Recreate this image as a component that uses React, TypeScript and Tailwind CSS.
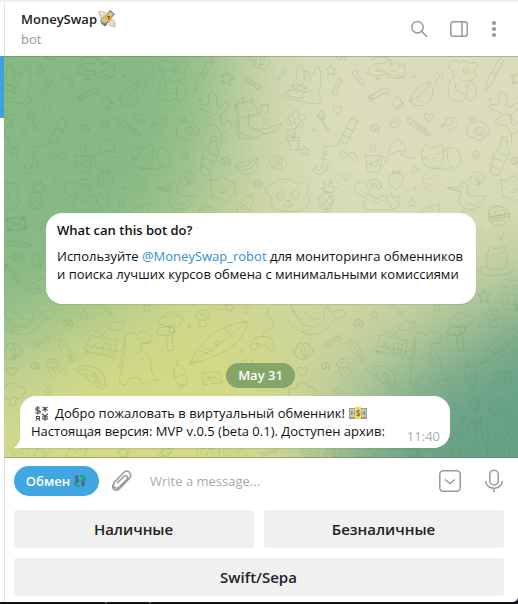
import React from "react";

/* One tile of the doodle wallpaper; it repeats every 871 units. */
const STAR = "M0-15l4 10 11 1-8 8 3 11-10-5-10 5 2-11-8-8 11-1z";
const HEART = "M0 13C-24-2-12-17 0-7 12-17 24-2 0 13z";
const SWIRL = "M0 0c4-4 7 4 1 6-9 2-12-9-4-13 11-4 18 8 11 16";
const BONE = "M-14-4c-10-8-16 4-8 5-4 7 7 11 9 3h26c2 8 13 4 9-3 8-1 2-13-8-5z";
const CURVE = "M-12-26c-8 4-8 14 0 22s10 14 14 26c8 6 10-4 6-12-4-12-14-16-12-26 4-6-2-12-8-10";
const PENCIL = "M-40-6l-6 6 6 8h64l18-8-18-6zM-28-6v14M24-6v14M-20 0h38";
const CHICK = "M-12-8c0-16 24-16 22 2 8 4 8 18-8 20-16 2-22-8-16-18zM10-4l8 3-8 4M-4 6c2 6 10 4 10-2M-4 14v8M4 14v8M0-9v2";
const ENVELOPE = "M-28-16l54-4 6 34-54 6zM-28-16l30 20 24-24M-22 20l16-22M32 14L8-2";
const CLOUD = "M-34 10c-14-14 0-28 12-22 2-20 30-22 34-4 16-8 28 10 14 20 2 12-20 14-24 4-6 10-26 10-28 0-2 6-8 6-8 2zM-10 14l2 20h12l4-20";
const DOG = "M-38 58c-30 2-30-18-8-26l20-2c-10-14 0-26 6-36-2-20 4-46 12-42 8 6 8 18 8 24 12-4 22 0 26 8 10 0 8-30 20-24 10 16 8 64-2 86 20 12 14 26-8 26zM-34 14l-18 32 46 10 16-34zM-34 14l16 24 28-16M2-8a9 13 0 1 0 18 0a9 13 0 1 0-18 0M8-8v4M-20 10c8 8 16 6 20-2M-20 28c14 12 36 12 48 0";
const BEAR = "M-30-20c-14-4-18-20-4-30 10-8 18-2 22 4 12-6 26-6 36 2 8-8 22-4 20 8-2 10-8 8-10 10 8 12 4 28-12 32 18 18 28 44 8 58-12 10-20-4-22-6-10 16-46 16-50-8-8-24 4-48 18-58-6-2-8-6-6-12zM0-24a8 10 0 1 0 16 0a8 10 0 1 0-16 0M6-24v3M20-14l12-4M-10 0c10 12 26 12 34 4M-22 16c-6 20 14 34 34 30M16 16c-8 18-4 34-4 42";
const FOX = "M-60 10c6-26 28-34 50-30 12-20 22-8 20 6l20-12 4 18 18-10-2 16c6 10 2 20-8 24-18 8-34-2-38-12-18 8-50 8-64 0zM8 0c4 8 12 8 16 0M-50-30c20-14 60-10 70 8M22 14l6 3 6-3M34 20l18 2M8 20l-14 4M-38-6l36 14M-40 4h20";
const MELON = "M-34 16C-28-8-8-28 26-40 40-18 40 10 12 28-4 38-28 32-34 16zM-34 16C-8 10 18-12 26-40M-14 16l3-2M0 20l3-2M12 6l3-2M20-6l3-4M22 10l2-4M-2 7l2-3";
const BRUSH = "M-20 50c2-24 6-40 16-52l12 8C4 22-6 38-20 50zM-4-2l20-36c6-14 20-8 16 4L8 6M0-8l14 8M18-36l12 6";
const GIRAFFE = "M-10-54c-6-6-8-12-2-14l6 12c6-2 12-2 14 0l4-12c8 2 4 10 0 14 12 6 20 24 16 32-6 8-20 6-26 4l2 30c20 14 46 12 66 2l30-10-18 24-40 8c-10 16-60 20-70 2-8-16-4-40 2-56l-8-26c-2-8 10-10 24-10zM-2-38v4M14-38v4M2-22c6 4 14 4 20 0M-14-14l20 4M-20 30c10 10 20 12 36 12M24 22l30 14M-24-10v60";
const FLOWERPOT = "M-8-34c-22-8-14-26 0-20 0-22 20-20 18-2 20-8 26 12 8 18 16 14 0 26-10 12-6 18-26 12-18-4-20 8-26-12-10-18M-2-38a8 8 0 1 0 14 0a8 8 0 1 0-14 0M2-20l-6 38M-24 10h38v10h-38zM-20 20l6 28h22l4-28M-4 8c-16-2-24-12-20-22 14 2 20 10 20 22";
const BOTTLE = "M14-60l16 6-2 24c12 18 4 34-8 50L4 58c-8 4-26-4-26-14l8-40c2-18 16-22 20-34zM12-48l18 6M-14 4l32 14M-20 28l28 14M2-14c6 8 14 10 24 12";
const CAT = "M-48 24c-18-22-8-52 2-60l14 10 22-4 10-10c8 8 8 20 6 28 14-26 44-18 50 8 8 26-6 46-20 36l-8-6M-48 24c12 18 44 16 50-6 6-8 8-16 4-30M-38-8c4 4 8 4 12 0M-14-12c4 4 8 4 12 0M-24 2l4 4 4-4M-54 0l14 2M-54 8l14-2M-30 32c20 8 56 8 60-2M30-24c-14 8-16 30-2 42";
const MUG = "M-28-18h46l-4 46c-8 6-28 6-38 0zM18-14c20-8 22 26-4 26M-18 6l28-12-8 22-8-6-6 4-2-8zM-14-28c-8-10 8-10 0-22M0-28c-8-10 8-10 0-22";
const ANCHOR = "M6-30a6 6 0 1 0 12 0a6 6 0 1 0-12 0M10-24L2 16c-4 10-16 6-18-8l-8 12c4 12 24 18 34 4l10-6 2-14-12 10M-2-16l22 6";
const BANANA = "M-34-2c18 6 36 2 54-24l8 0c4 20 0 40-20 48-20 6-36-2-44-20zM-26 8c20 6 44-2 52-30M-34-2l-2-8 8-2c14 2 30-2 44-18";
const BERRY = "M-22-8c12-16 36-16 44 0 0 20-14 34-24 38-12-6-22-20-20-38zM-8-16l-4-12 12 8 12-10-4 14M-8 0v3M6-4v3M0 10v3M10 8v3M-8 14v3";
const CUSHION = "M-38-22c18 4 30 0 38-14 12 14 24 20 38 20-4 16-4 28 2 40-16 4-26 10-34 20-10-12-22-16-38-16 0-18-2-34-6-50zM-12 12c8 8 16 6 24-2M0 4a1 1 0 0 0 8 0M-24 0l6 3M18-4l6-2";
const PANDA = "M-52 6c-22-12-18-36 0-32 14-24 60-28 78-6 20-14 46 6 32 28 20 36-6 56-52 54-44 2-66-16-58-44zM-32 4c4-18 28-18 20 2-6 16-22 14-20-2zM10 0c4-16 26-14 24 4-8 14-24 10-24-4zM-24 6v3M20 2v3M-4 18l10-2-4 8zM-16 32c8 6 28 4 32-4";
const PINEAPPLE = "M-10-12c-18 14-16 42 0 50 20 8 36-18 28-40-6-14-18-16-28-10zM-14 0l30 28M-18 16l22 22M0-12l20 26M16-6l-30 36M20 12L-2 36M2-12l-12 12M-2-14l-14-12 12 2-2-20 12 12 10-18 2 22 14 0-12 14z";
const SLOTH = "M-30-28c-10-10-38-2-32 18 4 16 20 18 32 24M-12-4c-22-6-14-36 6-36 22-2 34 22 18 34M-16 4c-12-6-18 12-8 18-16 8-14 28 8 30h54c16-4 10-26-4-24 8-14-4-24-14-18l-16 8zM-12-22a6 6 0 1 0 12 0a6 6 0 1 0-12 0M4-18a6 6 0 1 0 12 0a6 6 0 1 0-12 0M-10 24c8 10 26 8 32-2M40 14l10-12 2 16 20-8-4 20 8 10-30 12";
const DUCK = "M-50-28l34 0c4-20 26-18 26 2v18l24 8 30-4-18 34c-20 12-50 10-60-8-4-20 6-26 4-38zM-50-24l32 8M-8-32v3M0 12c14 18 40 16 46 0M-2 36l-4 12 14-6M20 38l4 10 8-6";
const AVOCADO = "M16-26C6-34-4-18-14-6c-22 16-14 34 0 34C8 32 22 0 22-16c0-6-2-8-6-10zM-12 8a7 7 0 1 0 14 0a7 7 0 1 0-14 0";
const BURGER = "M-32 2c-4-38 52-44 62-12zM-32 2l62-12 2 8-62 12zM-28 10c6 30 56 18 58-12M-14-16l3 2M0-22l3 2M12-16l3 2M-26 14c8 8 12-6 20 0s14-8 22-4";
const HATBEAR = "M-36 20c-24-6-22 22 8 26 44 6 90-10 70-28-10-12-20-6-20-6M-30 22c-4-24-2-40 6-48-6-14 8-20 14-8l20-2c6-12 20-4 14 8 8 12 6 36 4 48M-12-18v3M8-20v3M-6-8l8-2M-32 22c16 12 50 10 62-4";
const UMBRELLA = "M-50-50c4 26 16 42 44 56C-2-20-20-40-50-50zM-50-50L14 30c12 14-10 26-12 12M-50-50c18 14 34 34 44 56";
const WHALE = "M-90-50c10 40 30 66 60 68 20 2 30-10 40-22-6-20 0-34 12-38 0 14 10 18 18 16 10-8 26-10 34 4-8 14-20 16-32 14-14 26-34 48-66 50C-60 42-90 20-102-6M-86-30l10 4M-78-16l8 2M-64-4l8 0M-50-30c10 20 30 28 50 26M-48 14l-10 20 24-6";
const DINO = "M-6-60c-18-18-40-6-38 14 4 26-4 56-10 92-6 20-8 34 0 40 14 6 22 0 20-14 14-6 28-6 38 0 0 16 12 20 24 10 14-12 26-8 32-6-18-12-24-24-24-36 0-28-14-46-26-52-4-8-6-16-4-24 22 2 34-8 28-22-8-18-36-18-44-2M6-52v3M14-38c8 4 16 2 20-4M4-12l-18 10M14 4l-16 12M-44-46l-6 10 4 10-8 10 4 12-8 10 4 12-6 10 2 12";
const POPSICLE = "M-22-30c-8 10-4 20 6 32l18 20 10-12C8-6-4-26-22-30zM-14-16L6 10M4 20l8 18 4-2-6-18M10 18l14 16M14 12l16 18";
const PACK = "M-38-22l82 16-14 50-84-20zM-30-38l8 12 8-10 10 14 10-8 8 14M-32-4l16 24M-18 0l-16 14M4 2l22 4-6 28-22-4zM12 8l4 16M-44 10l88 16";
const WATCH = "M-20-30c-16 0-16 20-4 22l14-2 4 38c4 6 16 4 16-2L4-10l10-10c-4-14-20-12-34-10zM-8-8l12-2M0-20v2";
const BOARD = "M-86 62C-66 8-14-54 84-66 88-10 16 38-86 62zM-86 62C-34 28 34-18 84-66M-60 20l34 14M-48 12l32 12M14-48L44-14M-10 0a6 6 0 1 0 12 0a6 6 0 1 0-12 0";
const MUSHROOM = "M-22-6c4-26 40-24 44 0-4 14-34 20-44 0zM-10 6l-2 16c6 6 20 6 24 0L8 6M-8-14a5 5 0 1 0 10 0M4-8a5 5 0 1 0 10 0";
const PAD = "M-24-16c10-6 40-6 48 0 12 14 14 34 4 38-12 0-14-12-18-16h-22c-4 10-14 18-22 10-4-12 0-24 10-32zM-18-4v10M-23 1h10M12-4v2M20 4v2M0-20c-6-30 50-10 30-50-10-12-20-16-14-36";
const SHELL = "M-22-8c0-14 14-18 18-10 8-8 20 0 18 8 12 2 10 18 2 22l-20 12-16-8c-12-6-10-18-2-24zM-10-8L-2 20M2-10L0 18M14-4L2 18";
const JELLY = "M-26-10c0-24 34-24 38-4-4 12-24 18-38 4zM-14-4c-8 20 10 18 2 34M-4-4c-4 16 16 16 8 30M4-6c4 14 18 10 14 24M-12-16c6-4 12-4 16-2M12-8c10 16 18 10 22 20";
const PIZZA = "M-42-20C-30-44 40-34 44 8c0 16-2 26-6 32zM-32-16C-14-30 26-18 32 28M-16-6a5 5 0 1 0 10 0a5 5 0 1 0-10 0M6-4a6 6 0 1 0 12 0a6 6 0 1 0-12 0M14 14a5 5 0 1 0 10 0a5 5 0 1 0-10 0";
const ICECREAM = "M-20-12c-2-22 18-26 28-12 12 20 12 36 8 50l-24 2c-6-12-12-26-12-40zM-16 0c10 8 18-10 28 0M-2 28l2 12c6 4 8-2 6-14M-12-34c-4-8 0-12 4-14 2 8 0 12-4 14";
const DONUT = "M-32-8c2-24 40-26 58-2 18 26-6 46-30 36-20-6-30-18-28-34zM-8 0c4-10 16-6 18 4-2 10-18 8-18-4zM-20-8l5-3M-6-18l5 3M12-12l4 4M18 8l-3 4M-16 8l5 3M-26 4c6 2 10 12 18 14s18 6 26 0";
const GIFT = "M-34-18l64-14 4 16-64 14zM-26-2l4 38c20 6 44-2 54-12l-4-38M-8-24l8 62M10-28l6 58M-4-24c-24-2-16-20 4-6 6-20 24-12 6 2";
const CASTLE = "M-44 40V4l-6-2 10-22 10 22-6 2v12h18V-4l-8-2 14-26 14 26-8 2v20h18V-6l-6-2 12-28 14 28-8 2v46M-12 40V24c4-8 14-8 16 0v16M-30 26v6M22 26v6";
const STAIR = "M0-26c-10 0-10 12-2 16s10 10 4 18c-2 10-14 2-18 10-4 10 10 10 10 22M12-16c12 0 14 12 6 20s0 16 8 18M-10-14c-14 4-18 16-6 22s10 20-4 26";
const CORAL = "M-8-64c-14 8-2 28-8 36s-22-6-26 6c2 18 30 12 36 26 4 14-22 8-20 20 4 18 34 4 42 22 8 18 8 26 8 50M-8-64c16-2 22 16 16 30-4 14 14 22 20 10s22-8 16 8c-10 18-26 14-24 30M4 4c14-6 24 4 20 18s12 20 16 6 20-4 14 8c-10 22-26 22-30 32";
const DOT = "M-4 0a4 4 0 1 0 8 0a4 4 0 1 0-8 0";

type Doodle = [string, number, number, number?, number?];
const DOODLES: Doodle[] = [
  [DOG, 910, 90], [STAR, 122, 60], [BONE, 140, 110, -65], [CURVE, 208, 84, -12], [FOX, 292, 60],
  [BEAR, 518, 85], [BRUSH, 606, 72], [STAR, 682, 84, 12, 1.3], [BONE, 758, 100, 30, 1.1], [MUG, 782, 32, -70, 0.8],
  [PENCIL, 845, 76, 125, 0.55], [STAIR, 445, 80, 0, 0.65], [MELON, 393, 135], [CURVE, 265, 135, 90, 1.2], [CHICK, 322, 160],
  [CORAL, 640, 190, 0, 1], [GIRAFFE, 742, 215, 0, 1.05], [HEART, 142, 180], [SWIRL, 90, 198], ["M0 0a12 12 0 1 0 24 0a12 12 0 1 0-24 0M14 12l20 34-4 2L10 12", 82, 196],
  ["M-24 34L10-34c4-8 24 2 20 10L-4 42zM10-34l20 10M-14 14l20 10M-4-6L16 4M-24 34c-10 30-30 4-54 20", 172, 240], ["M-12 0c2-14 20-14 22 0 4 12-22 12-22 0M-14-8v-5M-5-14v-6M6-14v-6M14-8v-5", 314, 224], [PENCIL, 388, 232, 37], [HEART, 416, 202, 8], [STAIR, 480, 220, 50, 0.85],
  ["M-34 0c-8-24 12-30 28-26 14-10 30 2 28 12 20 4 14 26-2 26-8 24-32 16-32 6-14 0-26-6-22-18zM-10 0a14 12 0 1 0 28 0a14 12 0 1 0-28 0M0-4v2M8-4v2M0 4c2 4 8 4 10 0", 564, 244], [FLOWERPOT, 886, 252],
  ["M-8-14h20v22M-8-14v26M-16 12a4 4 0 1 0 8 0M4 8a4 4 0 1 0 8 0", 792, 178], [STAIR, 796, 212, 0, 0.45], [BOTTLE, 622, 318], [CAT, 452, 320], ["M-44-4c6-20 18-44 32-36 14 8 22 20 18 38-10-8-30-6-48 10zM-8 2c16 8 26 16 46 10", 338, 310],
  [MUG, 255, 335], ["M-4 0l-22-14c-8 12-2 22 4 26l18-8 16 16c10-4 8-18 2-24L4-6l-8 6z", 180, 314], [ANCHOR, 92, 340], [STAR, 43, 303], [SWIRL, 674, 334, 0, 1.4], [BANANA, 744, 350], [DONUT, 834, 338, 0, 0.8], [HEART, 838, 332, 0, 0.7],
  ["M-12 0a12 12 0 1 0 24 0a12 12 0 1 0-24 0M-5 0a5 5 0 1 0 10 0a5 5 0 1 0-10 0", 557, 316], [BERRY, 318, 388], [CUSHION, 420, 400, 0, 0.55], [SHELL, 564, 386, 0, 0.9], [CUSHION, 668, 412], [PANDA, 864, 434],
  [PINEAPPLE, 108, 440], [SLOTH, 254, 428], [DUCK, 522, 440], [AVOCADO, 737, 464], [HEART, 166, 380, 20, 0.8], [HEART, 374, 360, 50, 0.8], [STAR, 366, 458, 0, 0.8], ["M-34 24C-26-4 4-16 40-22L28 26zM-18 10l6 3M4 8l6 3M14-6l6 2", 410, 484], [DONUT, 620, 488, 0, 0.8], [SWIRL, 772, 402, 0, 1.3],
  [ENVELOPE, 50, 520], [HEART, 122, 526], [PENCIL, 60, 582, 5, 0.9], [SWIRL, 50, 622, 0, 1.5], [UMBRELLA, 62, 690], [CHICK, 112, 634, -15, 1.1], [AVOCADO, 120, 706, 20], [ENVELOPE, 916, 524],
  [BURGER, 627, 500], [STAIR, 570, 540, 70, 0.45], [CHICK, 632, 556, 0, 0.65], [HATBEAR, 620, 630], [STAR, 582, 738, 0, 1.25], [BEAR, 668, 728, 0, 0.75],
  [WHALE, 92, 812], [SWIRL, 202, 820, 0, 1.4], [STAR, 252, 794, 0, 0.9], [PENCIL, 320, 780, 45, 0.65], [STAR, 440, 772, 0, 0.8], ["M-24 12c8-24 28-24 38-16l10-8-2 18c-12 14-28 14-46 6z", 350, 824], [CLOUD, 516, 814], [MUSHROOM, 608, 804], [BOARD, 656, 880],
  [BONE, 128, 874, -30], [POPSICLE, 202, 900], [PACK, 310, 878], [DINO, 418, 916], [WATCH, 510, 866, 0, 1.15], [PAD, 788, 880], [STAR, 690, 772, 15, 0.9], [STAR, 738, 780, 0, 0.7], [SHELL, 43, 904, 0, 1.1],
  [SWIRL, 103, 948, 0, 1.3], [JELLY, 164, 956], [PIZZA, 270, 980], [ICECREAM, 542, 978], [ENVELOPE, 634, 984], [HEART, 634, 988, 0, 0.6], [HEART, 36, 964, 0, 1.1], [STAR, 144, 1024, 0, 0.8], [CLOUD, 40, 1030, 0, 1.1], [MUSHROOM, 744, 956, -20, 1.1],
  [CHICK, 554, 1066], [DONUT, 628, 1074], [PENCIL, 508, 1088, 55, 0.7], [GIFT, 562, 1142], [STAR, 478, 1158, 0, 0.9], [PENCIL, 500, 1150, 60, 0.8], [CASTLE, 634, 1180],
  ["M-14 0a14 14 0 1 0 28 0a14 14 0 1 0-28 0M-22 12c-8-2 30-30 44-22 4 6-32 30-44 22", 498, 1206], ["M-30 16L-16-14h50l-8 30zM-16-14l14 14L34-14", 228, 1204], [STAR, 370, 1206, 0, 1.2], [DONUT, 60, 1206, 0, 0.8], [SHELL, 132, 1206], [PENCIL, 810, 1206, -20, 0.7], [CAT, 705, 1214, 0, 0.6],
  [DOT, 262, 86], [DOT, 372, 80], [DOT, 600, 148], [DOT, 374, 416], [DOT, 710, 168], [DOT, 72, 240], [DOT, 568, 828], [DOT, 262, 908], [DOT, 512, 1112], [DOT, 726, 902],
  [SWIRL, 240, 148], [SWIRL, 252, 235, 0, 1.4], [SWIRL, 545, 205], [SWIRL, 150, 20, 0, 1.4],
];

function Wallpaper() {
  return (
    <svg className="absolute inset-0 h-full w-full" viewBox="12 18 1542 1206" preserveAspectRatio="none" fill="none" aria-hidden="true">
      <defs>
        <filter id="soft" filterUnits="userSpaceOnUse" x="-600" y="-600" width="2800" height="2400" colorInterpolationFilters="sRGB">
          <feGaussianBlur stdDeviation="135" />
        </filter>
        <g id="doodles">
          {DOODLES.map(([d, x, y, r = 0, s = 1], i) => (
            <path key={i} d={d} transform={`translate(${x} ${y}) rotate(${r}) scale(${s})`} />
          ))}
        </g>
      </defs>
      <rect x="12" y="18" width="1542" height="1206" fill="#c9d29a" />
      <g filter="url(#soft)">
        <path d="M-600-600H2200V1800H-600z" fill="#cbd49f" />
        <path d="M720-600H2200V600L1540 520 1160 620 840 600z" fill="#dadcbb" />
        <path d="M-600-600H670L680 160 590 480 420 680 120 850-600 1080z" fill="#86b984" />
        <path d="M-400 1800L-20 1120 200 840 560 700 840 780 860 1000 780 1800z" fill="#d3d985" />
        <path d="M2300 640L1560 740 1340 880 1140 1020 1000 1220 920 1800H2300z" fill="#67a286" />
      </g>
      <g stroke="#4f7b3a" strokeOpacity=".165" strokeWidth="2.8" strokeLinecap="round" strokeLinejoin="round">
        <use href="#doodles" x="-871" />
        <use href="#doodles" />
        <use href="#doodles" x="871" />
      </g>
      <path d="M12 19.5H1554M12 1222.5H1554" stroke="#648257" strokeOpacity=".45" strokeWidth="3" />
    </svg>
  );
}

function WingedMoney() {
  return (
    <svg className="ml-px h-[18px] w-[19px]" viewBox="0 0 19 18" aria-hidden="true">
      <path d="M1 1l6 1 2 4-4 3-3-1 1-2-2-1 1-1-2-1zM18 17l-6-1-2-3 4-4 3 2-1 2 2 1-2 1z" fill="#e6ddc8" stroke="#b7ae98" strokeWidth=".6" />
      <path d="M2 11L12 0l5 4L7 16z" fill="#86856e" />
      <path d="M2.5 10.5L12 1l4 3-9 10z" fill="#c9c7a9" stroke="#70715f" strokeWidth=".6" />
      <path d="M5.5 6.5l4-3 5 5-4 4z" fill="#e4b745" />
      <path d="M9 6l3 1-2 1 2 2" stroke="#72572a" fill="none" />
      <path d="M3 13l4 3 2-2" stroke="#656651" fill="none" />
    </svg>
  );
}

function Banknote() {
  return (
    <svg className="h-[13px] w-[18px]" viewBox="0 0 18 13" aria-hidden="true">
      <path d="M0 1h18v11H0z" fill="#9b9d8c" />
      <path d="M1 2h16v8H1z" fill="#cbcbb5" />
      <path d="M2 4h1.500v4H2zM14.500 4H16v4h-1.500z" fill="#85887a" />
      <circle cx="9" cy="6" r="4.200" fill="#a0a18d" />
      <path d="M6 0h6v12H6z" fill="#f4d75e" />
      <path d="M10.800 3.800H8v2l2.500.7v2H7.500M9.200 2.600v7" stroke="#85702e" strokeWidth=".9" fill="none" />
    </svg>
  );
}

function CurrencySigns() {
  return (
    <svg className="h-[15px] w-[15px]" viewBox="0 0 15 15" fill="none" stroke="#555" strokeWidth="1.2" aria-hidden="true">
      <path d="M6 2H2v2l4 1v2H1M3.7 0v8.500M2.500 14.500v-4h3v2h-3m1.500 0l2 2M8.500 1l5 3.500m0-3.500l-5 3.500M11 1v5M8 7.800l3 2.500 3-2.500M11 10v5M8 10.800h6M8 12.800h6" />
    </svg>
  );
}

function Exchange() {
  return (
    <svg className="h-3 w-3" viewBox="0 0 12 12" fill="none" aria-hidden="true">
      <path d="M6 1c3-1 5 1 4.500 3.500M8.300 3l2.200 2L12 3M6 11c-3 1-5-1-4.500-3.500M0 9l1.500-2L3.700 9" stroke="#10a45c" strokeWidth="1.400" />
      <path d="M4.500 1.500H1.500v2L4.500 4.300v2H1M3 .3v7M7 5l2 2.500L11 5M9 7.500v4M7.200 8h3.600M7.200 9.700h3.600" stroke="#4f5b60" strokeWidth="1.1" />
    </svg>
  );
}

function KeyButton({ children }: { children: React.ReactNode }) {
  return (
    <button className="flex h-[38px] flex-1 items-center justify-center rounded-[3px] bg-[#f0f0f0] pr-px text-[15px] font-semibold text-[#222]">
      {children}
    </button>
  );
}

export default function App() {
  return (
    <div className="h-[604px] w-[518px] overflow-hidden bg-[#111118] font-['Open_Sans','Noto_Sans',sans-serif] text-[13px] leading-[18px] text-[#111]">
      <div className="flex h-[602px] overflow-hidden rounded-br-[5px] border-t-2 border-[#efefef] bg-white">
        <aside className="w-1 shrink-0 pt-[54px]">
          <div className="h-[62px] bg-[#419fd9]" />
        </aside>
        <main className="flex min-w-0 flex-1 flex-col">
          <header className="flex h-[54px] shrink-0 items-center justify-between border-l border-[#e4e4e4] pl-4 pr-[18px]">
            <div className="pb-px">
              <div className="flex h-5 items-center font-semibold text-[#222]">
                <span>MoneySwap</span>
                <WingedMoney />
              </div>
              <div className="h-5 leading-5 text-[#999]">bot</div>
            </div>
            <div className="flex items-center text-[#999]">
              <svg className="h-[18px] w-[18px]" viewBox="0 0 18 18" fill="none" stroke="currentColor" strokeWidth="1.5">
                <circle cx="7.500" cy="7.200" r="5.700" /><path d="M11.700 11.400L17 16.700" />
              </svg>
              <svg className="ml-[22px] h-[18px] w-[18px]" viewBox="0 0 18 18" fill="none" stroke="currentColor" strokeWidth="1.5">
                <rect x=".8" y="1.800" width="16.400" height="14.400" rx="2.500" /><path d="M12 2v14" />
              </svg>
              <svg className="ml-5 h-[18px] w-3" viewBox="0 0 12 18" fill="currentColor">
                <circle cx="6" cy="3" r="2.100" /><circle cx="6" cy="9" r="2.100" /><circle cx="6" cy="15" r="2.100" />
              </svg>
            </div>
          </header>

          <section className="relative flex h-[402px] shrink-0 flex-col overflow-hidden pt-[157px]">
            <Wallpaper />
            <article className="relative ml-[42px] h-[91px] w-[430px] rounded-[16px] bg-white px-[11px] pt-[8px] shadow-[0_1px_1px_#688d5540]">
              <h1 className="font-semibold">What can this bot do?</h1>
              <p className="mt-2 whitespace-nowrap">
                Используйте <a className="text-[#2c91d1]">@MoneySwap_robot</a> для мониторинга обменников<br />
                и поиска лучших курсов обмена с минимальными комиссиями
              </p>
            </article>
            <div className="relative ml-[222px] mt-[59px] flex h-[25px] w-[69px] items-center justify-center rounded-full bg-[#7a9d62dd] pb-px font-semibold text-white">May 31</div>
            <article className="relative ml-4 mt-2 h-[52px] w-[430px] rounded-[16px] rounded-bl-none bg-white pl-[11px] pt-2 shadow-[0_1px_1px_#688d5540]">
              <svg className="absolute -left-1.5 bottom-0 h-3 w-1.5" viewBox="0 0 6 12"><path d="M6 0c0 6-1 8-6 11.500V12h6z" fill="white" /></svg>
              <div className="flex h-[18px] items-center whitespace-nowrap">
                <span className="mr-[6px] ml-[3px]"><CurrencySigns /></span>
                <span>Добро пожаловать в виртуальный обменник!</span>
                <span className="ml-[4px]"><Banknote /></span>
              </div>
              <p className="whitespace-nowrap">Настоящая версия: MVP v.0.5 (beta 0.1). Доступен архив:</p>
              <time className="absolute bottom-[3px] right-[10px] text-[#a0acb6]">11:40</time>
            </article>
          </section>

          <footer className="flex-1 border-l border-[#e4e4e4] pl-[9px] pr-[14px] pt-2">
            <div className="flex h-[30px] items-center pr-px">
              <button className="flex h-[30px] w-[85px] items-center justify-center gap-[4px] rounded-full bg-[#40a7e3] pr-px font-semibold text-white">Обмен<Exchange /></button>
              <svg className="ml-[13px] h-[22px] w-[20px] text-[#999]" viewBox="0 0 20 22" fill="none" stroke="currentColor" strokeWidth="1.500" strokeLinecap="round">
                <path d="M5.500 12.700l6.500-6.500c2-2 5 1 3 3l-7.500 7.500c-4 4-8-1-5-4.500l9-9.500c4-4 9.500 1 6 5.500l-9.500 10c-4 4-9 1-6.500-4" />
              </svg>
              <span className="ml-[18px] flex-1 text-[#aaa]">Write a message...</span>
              <svg className="h-[22px] w-[22px] text-[#999]" viewBox="0 0 22 22" fill="none" stroke="currentColor" strokeWidth="1.500">
                <rect x=".8" y=".8" width="20.400" height="20.400" rx="3.500" /><path d="M6 9.500l5 4 5-4" />
              </svg>
              <svg className="ml-6 h-6 w-[18px] text-[#999]" viewBox="0 0 18 24" fill="none" stroke="currentColor" strokeWidth="1.500">
                <rect x="4.800" y="1.200" width="8.400" height="14.800" rx="4.200" /><path d="M.8 12c0 9.500 16.400 9.500 16.400 0M9 19.200v4" />
              </svg>
            </div>
            <div className="mt-[14px] flex gap-[10px]"><KeyButton>Наличные</KeyButton><KeyButton>Безналичные</KeyButton></div>
            <div className="mt-[10px] flex"><KeyButton>Swift/Sepa</KeyButton></div>
          </footer>
        </main>
      </div>
      <div className="flex h-[2px] gap-[42px] pl-[105px]"><i className="h-px w-0.5 bg-[#888]" /><i className="h-px w-0.5 bg-[#888]" /></div>
    </div>
  );
}
